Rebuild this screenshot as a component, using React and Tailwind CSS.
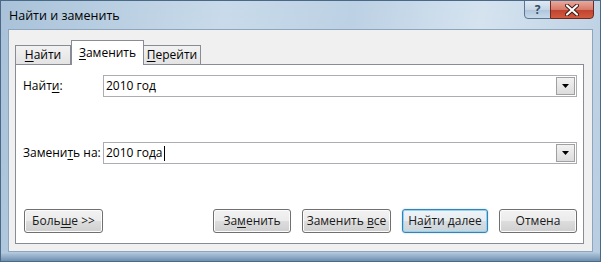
import React from "react";

const U = ({ children }) => <span className="underline underline-offset-2">{children}</span>;

function Btn({ children, w, def }) {
  return (
    <div
      className={`h-[24px] flex items-center justify-center rounded-[3px] border text-[12px] text-[#1a1a1a] ${w} ${
        def
          ? "border-[#3c7fb1] shadow-[inset_0_0_0_1px_#8fd3f2,0_0_2px_#9fd4f0] bg-[linear-gradient(#f0f4f7_0%,#e6ecf0_50%,#d7dee3_51%,#cbd3d9_100%)]"
          : "border-[#707070] shadow-[inset_0_0_0_1px_#fcfcfc] bg-[linear-gradient(#f2f2f2_0%,#ebebeb_50%,#dddddd_51%,#cfcfcf_100%)]"
      }`}
    >
      {children}
    </div>
  );
}

function Combo({ value, cursor }) {
  return (
    <div className="relative h-[22px] w-[474px] border border-[#abadb3] bg-white flex items-center pl-[2px] text-[12px] text-black">
      <span>{value}</span>
      {cursor && <span className="inline-block w-[1px] h-[15px] bg-black ml-[1px]" />}
      <div className="absolute right-[1px] top-[1px] w-[19px] h-[18px] border border-[#a0a0a0] bg-[linear-gradient(#f2f2f2,#dcdcdc)] flex items-center justify-center">
        <svg width="7" height="4" viewBox="0 0 7 4">
          <path d="M0 0h7L3.5 4z" fill="#000" />
        </svg>
      </div>
    </div>
  );
}

export default function App() {
  return (
    <div
      className="w-[601px] h-[262px] flex flex-col overflow-hidden border border-[#4a6986] bg-[linear-gradient(100deg,#a9c2d9_0%,#c9dbea_35%,#bcd1e4_55%,#d5e3ef_75%,#b8cde1_100%)]"
      style={{ fontFamily: '"Open Sans", "Noto Sans", sans-serif' }}
    >
      {/* title bar */}
      <div className="relative h-[28px] flex items-center pl-[8px] text-[12.5px] text-black">
        <span className="mt-[2px]">Найти и заменить</span>
        <div className="absolute top-[-1px] right-[49px] w-[27px] h-[19px] rounded-bl-[4px] border border-[#5b7693] bg-[linear-gradient(#dfe9f3_0%,#c6d6e6_50%,#aec4da_51%,#c7d9ea_100%)] flex items-center justify-center text-[12px] font-bold text-[#334d66]">
          ?
        </div>
        <div className="absolute top-[-1px] right-[6px] w-[44px] h-[19px] rounded-br-[4px] border border-[#6d2a22] bg-[linear-gradient(#e9a99b_0%,#d77a69_50%,#c0412f_51%,#d25b3f_100%)] flex items-center justify-center">
          <svg width="14" height="12" viewBox="0 0 14 12">
            <path d="M2 1.5L12 10.5M12 1.5L2 10.5" stroke="#3a1510" strokeWidth="4" strokeLinecap="round" />
            <path d="M2 1.5L12 10.5M12 1.5L2 10.5" stroke="#fff" strokeWidth="2.2" strokeLinecap="round" />
          </svg>
        </div>
      </div>

      {/* client area */}
      <div className="mx-[7px] h-[223px] bg-[#f0f0f0] border border-[#8ea6bd] pl-[6px] pr-[8px] pt-[9px]">
        {/* tabs */}
        <div className="flex items-end h-[25px] text-[12px] text-black">
          <div className="h-[19px] w-[56px] border border-b-0 border-[#898c95] bg-[linear-gradient(#f2f2f2,#e3e3e3)] flex items-center justify-center">
            <span><U>Н</U>айти</span>
          </div>
          <div className="relative z-10 h-[25px] w-[73px] -mb-[1px] border border-b-0 border-[#898c95] bg-white flex items-center justify-center">
            <span><U>З</U>аменить</span>
          </div>
          <div className="h-[19px] w-[57px] border border-b-0 border-l-0 border-[#898c95] bg-[linear-gradient(#f2f2f2,#e3e3e3)] flex items-center justify-center">
            <span><U>П</U>ерейти</span>
          </div>
        </div>

        {/* panel */}
        <div className="h-[180px] border border-[#898c95] bg-white pl-[7px] pr-[6px] pt-[10px] flex flex-col text-[12px] text-black">
          <div className="flex items-center h-[22px]">
            <div className="w-[80px]">Найт<U>и</U>:</div>
            <Combo value="2010 год" />
          </div>
          <div className="flex items-center h-[22px] mt-[45px]">
            <div className="w-[80px]">Замени<U>т</U>ь на:</div>
            <Combo value="2010 года" cursor />
          </div>
          <div className="flex items-center mt-[45px]">
            <div className="ml-[1px]">
              <Btn w="w-[79px]">
                <span>Боль<U>ш</U>е &gt;&gt;</span>
              </Btn>
            </div>
            <div className="ml-auto flex gap-[11px]">
              <Btn w="w-[78px]">
                <span>За<U>м</U>енить</span>
              </Btn>
              <Btn w="w-[89px]">
                <span>Заменить <U>в</U>се</span>
              </Btn>
              <Btn w="w-[86px]" def>
                <span>На<U>й</U>ти далее</span>
              </Btn>
              <Btn w="w-[78px]">
                <span>Отмена</span>
              </Btn>
            </div>
          </div>
        </div>
      </div>
      <div className="flex-1 bg-[linear-gradient(#b7cde1,#6f8fae)]" />
    </div>
  );
}
